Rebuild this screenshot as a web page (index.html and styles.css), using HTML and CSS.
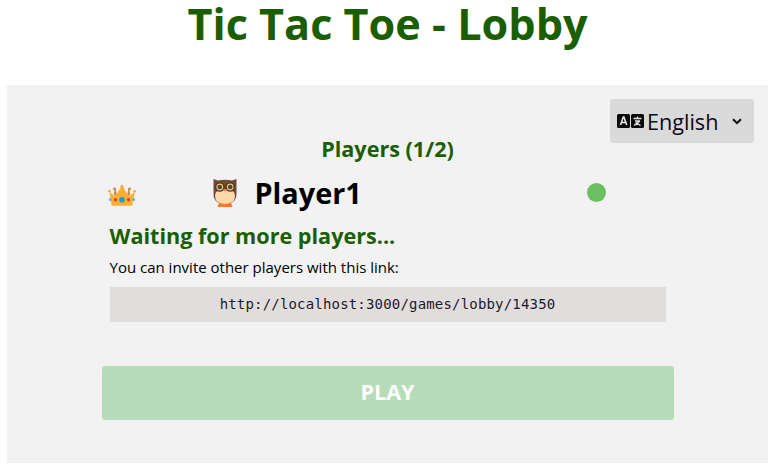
FILE: index.html
```html
<!DOCTYPE html>
<html lang="en">
<head>
    <meta charset="UTF-8">
    <meta name="viewport" content="width=device-width, initial-scale=1.0">
    <title>Tic Tac Toe - Lobby</title>
    <link rel="stylesheet" href="styles.css">
</head>
<body>
    <h1 class="page-title">Tic Tac Toe - Lobby</h1>
    <div class="lobby">
        <div class="lang-select">
            <svg class="lang-icon" width="27" height="14" viewBox="0 0 27 14">
                <rect x="0" y="0" width="13" height="14" rx="1.500" fill="#0a0a0a"/>
                <rect x="14" y="0" width="13" height="14" rx="1.500" fill="#0a0a0a"/>
                <path d="M3.500 11 6.300 3h.6l2.800 8M4.600 8.600h4" fill="none" stroke="#eee" stroke-width="1.500"/>
                <path d="M16.500 4.500h8M20.500 2.500v2M18 7h5M17 11.500l6-4.500M18.500 8.500l5 3" fill="none" stroke="#e4e4e4" stroke-width="1.300"/>
            </svg>
            <span class="lang-name">English</span>
            <svg class="lang-arrow" width="10" height="7" viewBox="0 0 10 7">
                <path d="M1 1.200 5 5l4-3.800" fill="none" stroke="#111" stroke-width="2"/>
            </svg>
        </div>

        <h2 class="players-title">Players (1/2)</h2>

        <div class="lobby-content">
            <div class="player-row">
                <svg class="crown" width="28" height="23" viewBox="0 0 30 24">
                    <circle cx="15" cy="2.500" r="1.800" fill="#f9a825"/>
                    <circle cx="7" cy="5" r="1.600" fill="#c98a4b"/>
                    <circle cx="23" cy="5" r="1.600" fill="#c98a4b"/>
                    <circle cx="1.500" cy="7.500" r="1.300" fill="#f9a825"/>
                    <circle cx="28.500" cy="7.500" r="1.300" fill="#f9a825"/>
                    <path d="M7 6h1.500l1 6H6zM21.500 6H23l1 6h-3.500z" fill="#c98a4b"/>
                    <path d="M1.500 8 7.500 13 14 3h2l6.500 10 6-5L26 23H4z" fill="#fbb032"/>
                    <rect x="1" y="15" width="3" height="3" rx="1.500" fill="#4fb6e6"/>
                    <rect x="26" y="15" width="3" height="3" rx="1.500" fill="#4fb6e6"/>
                    <circle cx="15" cy="16.500" r="3" fill="#1e98dc"/>
                    <circle cx="8" cy="16.500" r="1.800" fill="#e53935"/>
                    <circle cx="22" cy="16.500" r="1.800" fill="#e53935"/>
                </svg>
                <svg class="owl" width="24" height="29" viewBox="0 0 24 29">
                    <path d="M6 25h12l1.500 4h-15z" fill="#f57c1f"/>
                    <path d="M0.500 1 5 2.500Q12 1 19 2.500L23.500 1 23.500 16Q23.500 26 12 26 .5 26 .5 16z" fill="#6d4c3d"/>
                    <path d="M2 18Q2 11 12 11 22 11 22 18 22 26 12 26 2 26 2 18z" fill="#fdd9a5"/>
                    <circle cx="6.800" cy="9" r="4.800" fill="#4e342e"/>
                    <circle cx="17.200" cy="9" r="4.800" fill="#4e342e"/>
                    <circle cx="6.800" cy="9" r="3.400" fill="#f2c94c"/>
                    <circle cx="17.200" cy="9" r="3.400" fill="#f2c94c"/>
                    <circle cx="6.800" cy="9" r="2.300" fill="#4a3f6b"/>
                    <circle cx="17.200" cy="9" r="2.300" fill="#4a3f6b"/>
                    <path d="M10.500 11h3L12 14z" fill="#f57c1f"/>
                </svg>
                <span class="player-name">Player1</span>
                <span class="status-dot"></span>
            </div>

            <h3 class="waiting">Waiting for more players...</h3>
            <p class="invite-text">You can invite other players with this link:</p>
            <div class="invite-link">http://localhost:3000/games/lobby/14350</div>

            <button class="play-btn" disabled>PLAY</button>
        </div>
    </div>
</body>
</html>
```

FILE: styles.css
```css
body {
    font-family: "Open Sans", "Noto Sans", Arial, sans-serif;
    margin: 0;
    background-color: #fff;
}
.page-title {
    margin: 0;
    height: 85px;
    font-size: 43.2px;
    line-height: 48px;
    font-weight: 700;
    color: #1b5e00;
    text-align: center;
}
.lobby {
    position: relative;
    margin: 0 7px;
    height: 378px;
    padding-top: 51px;
    box-sizing: border-box;
    background-color: #f2f2f2;
}
.lang-select {
    position: absolute;
    top: 14px;
    right: 14px;
    width: 144px;
    height: 44px;
    box-sizing: border-box;
    padding: 0 12px 0 7px;
    display: flex;
    align-items: center;
    background-color: #dadada;
    border-radius: 3px;
}
.lang-name {
    margin-left: 3px;
    font-size: 21.6px;
    color: #0a0a20;
}
.lang-arrow {
    margin-left: auto;
}
.players-title {
    margin: 0;
    font-size: 21.6px;
    line-height: 26px;
    font-weight: 700;
    color: #1b5e00;
    text-align: center;
}
.lobby-content {
    width: 572px;
    margin: 0 auto;
}
.player-row {
    display: flex;
    align-items: center;
    height: 46px;
    margin-top: 7px;
    padding: 0 68px 0 6px;
}
.crown {
    margin-top: 6px;
}
.owl {
    margin-left: 77px;
}
.player-name {
    margin-left: 18px;
    font-size: 28.8px;
    font-weight: 700;
    color: #000;
}
.status-dot {
    margin-left: auto;
    margin-top: 1px;
    width: 19px;
    height: 19px;
    border-radius: 50%;
    background-color: #6abf60;
}
.waiting {
    margin: 6px 0 0 8px;
    font-size: 21.6px;
    line-height: 30px;
    font-weight: 700;
    color: #1b5e00;
}
.invite-text {
    margin: 6px 0 0 8px;
    font-size: 15px;
    line-height: 20px;
    color: #000;
}
.invite-link {
    margin: 10px 8px 0;
    height: 35px;
    line-height: 35px;
    background-color: #e2dddd;
    font-family: "DejaVu Sans Mono", monospace;
    font-size: 14px;
    letter-spacing: 0.18px;
    color: #1a1a2e;
    text-align: center;
}
.play-btn {
    display: block;
    width: 100%;
    height: 54px;
    margin-top: 44px;
    padding: 0 0 4px;
    border: none;
    border-radius: 3px;
    background-color: #b7dcb9;
    color: #fff;
    font-family: inherit;
    font-size: 21.6px;
    font-weight: 700;
}
```
